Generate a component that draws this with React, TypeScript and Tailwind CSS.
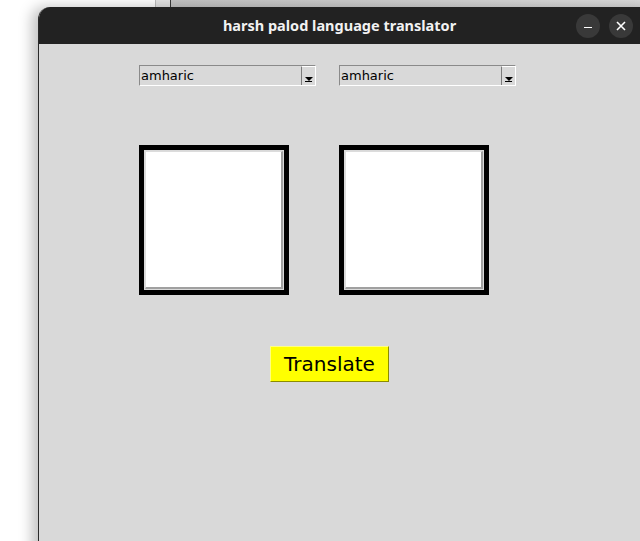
import { useState } from "react";

const languages = ["amharic", "arabic", "english", "french", "german", "hindi"];

function LangSelect({ value }: { value: string }) {
  return (
    <div className="flex h-[21px] w-[177px] border border-t-[#8a8a8a] border-l-[#8a8a8a] border-b-white border-r-white bg-[#d9d9d9]">
      <div className="flex-1 pl-[1px] text-[13px] leading-[19px] text-black">
        {value}
      </div>
      <div className="flex w-[14px] flex-col items-center justify-end border-l border-l-[#7a7a7a] border-t border-t-white pb-[3px]">
        <div className="h-0 w-0 border-l-[4px] border-r-[4px] border-t-[4px] border-l-transparent border-r-transparent border-t-black" />
        <div className="h-[1px] w-[7px] bg-black" />
      </div>
    </div>
  );
}

function TextBox() {
  return (
    <div className="h-[150px] w-[150px] border-[5px] border-black bg-[#d9d9d9] p-[1px]">
      <div className="h-full w-full border border-t-[#dcdcdc] border-l-[#dcdcdc] border-b-[#a0a0a0] border-r-[#a0a0a0] border-b-2 border-r-2 bg-white" />
    </div>
  );
}

export default function App() {
  const [source] = useState(languages[0]);
  const [target] = useState(languages[0]);

  return (
    <div
      className="relative h-[541px] w-[640px] overflow-hidden bg-white"
      style={{ fontFamily: '"DejaVu Sans", sans-serif' }}
    >
      {/* windows behind */}
      <div className="absolute left-[155px] top-0 flex h-[8px] w-[485px]">
        <div className="w-[1px] bg-[#bdbdbd]" />
        <div className="w-[14px] bg-[#e4e4e4]" />
        <div className="w-[1px] bg-[#3a3a3a]" />
        <div className="flex-1 bg-gradient-to-r from-[#c4c4c4] to-[#dcdcdc]" />
      </div>

      <div className="absolute left-[38px] top-[7px] flex h-[560px] w-[620px] flex-col overflow-hidden rounded-t-[12px] border-l border-[#2a2a2a] shadow-[-6px_0_14px_rgba(0,0,0,0.25)]">
        <div className="relative flex h-[37px] items-center justify-center bg-[#222222]">
          <span
            className="ml-[-18px] text-[14.5px] font-bold text-[#f2f2f2]"
            style={{ fontFamily: '"Noto Sans", sans-serif' }}
          >
            harsh palod language translator
          </span>
          <div className="absolute left-[537px] top-[7px] flex gap-[9px]">
            <div className="flex h-[24px] w-[24px] items-center justify-center rounded-full bg-[#393939]">
              <div className="mt-[3px] h-[1.5px] w-[8px] bg-white" />
            </div>
            <div className="flex h-[24px] w-[24px] items-center justify-center rounded-full bg-[#393939]">
              <svg width="10" height="10" viewBox="0 0 10 10">
                <path d="M1 1L9 9M9 1L1 9" stroke="white" strokeWidth="1.6" />
              </svg>
            </div>
          </div>
        </div>

        <div className="flex flex-1 flex-col bg-[#d9d9d9] pl-[100px] pt-[21px]">
          <div className="flex gap-[23px]">
            <LangSelect value={source} />
            <LangSelect value={target} />
          </div>
          <div className="mt-[59px] flex gap-[50px]">
            <TextBox />
            <TextBox />
          </div>
          <div className="mt-[51px] pl-[131px]">
            <button className="h-[36px] w-[119px] border border-t-[#ffff80] border-l-[#ffff80] border-b-[#8c8c00] border-r-[#8c8c00] bg-[#ffff00] text-[20px] leading-[32px] text-black">
              Translate
            </button>
          </div>
        </div>
      </div>
    </div>
  );
}
